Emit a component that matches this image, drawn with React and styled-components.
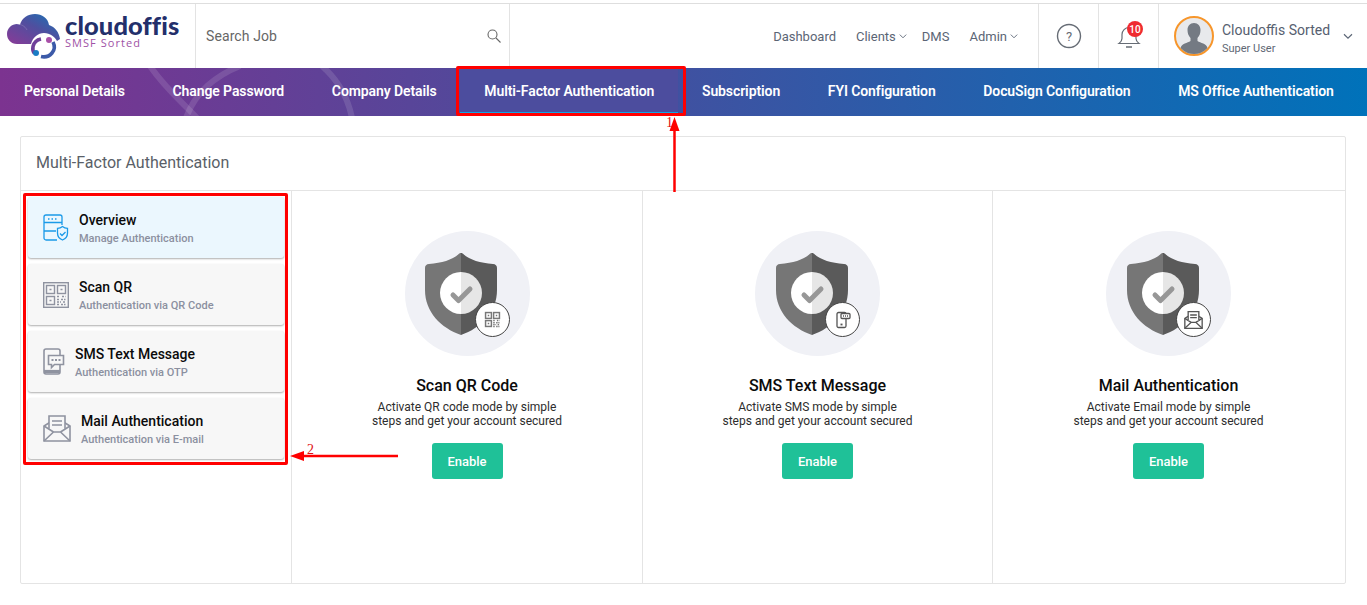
import React from "react";
import styled, { createGlobalStyle } from "styled-components";

const Global = createGlobalStyle`
  html, body { margin: 0; padding: 0; background: #fff; }
  body { font-family: Roboto, "Liberation Sans", sans-serif; }
  * { box-sizing: border-box; }
`;
const Page = styled.div`
  position: relative; width: 1367px; height: 605px; overflow: hidden; background: #fff; padding-top: 3px;
`;
const Header = styled.header`
  display: flex; align-items: stretch; height: 65px; border-top: 1px solid #dedede; background: #fff;
`;
const LogoBox = styled.div`
  width: 196px; border-right: 1px solid #e3e3e3; display: flex; align-items: flex-start; padding: 9px 0 0 7px;
`;
const LogoText = styled.div`
  margin-top: 1px; display: flex; flex-direction: column;
`;
const LogoName = styled.span`
  font-family: Lato, sans-serif; font-weight: 900; font-size: 25.5px; line-height: 22px; color: #232f6b; letter-spacing: 0.1px;
`;
const LogoSub = styled.span`
  font-family: "Open Sans", sans-serif; font-size: 11px; line-height: 12px; color: #a052a6; letter-spacing: 1.05px; margin-top: 1px;
`;
const SearchBox = styled.div`
  width: 314px; border-right: 1px solid #e3e3e3; display: flex; align-items: center; justify-content: space-between;
  padding: 0 8px 0 10px; font-size: 14px; color: #666; letter-spacing: 0.1px;
`;
const Nav = styled.nav`
  flex: 1; display: flex; align-items: center; justify-content: flex-end; gap: 20px; padding-right: 20px;
`;
const NavItem = styled.span`
  display: inline-flex; align-items: center; gap: 3px; font-size: 13px; color: #5b6575;
  margin-left: ${p => p.$tight ? "-5px" : "0"};
`;
const IconCell = styled.div`
  position: relative; width: 60px; border-left: 1px solid #e3e3e3; display: flex; align-items: center; justify-content: center;
`;
const Badge = styled.span`
  position: absolute; left: 28px; top: 17px; width: 16px; height: 16px; border-radius: 50%; background: #ef2b30; color: #fff;
  font-size: 10px; font-weight: 500; display: flex; align-items: center; justify-content: center;
`;
const UserCell = styled.div`
  width: 209px; border-left: 1px solid #e3e3e3; display: flex; align-items: center; padding-left: 15px;
`;
const Avatar = styled.div`
  width: 40px; height: 40px; border-radius: 50%; border: 2px solid #f7962b; background: #e8e9ec; overflow: hidden; flex: none;
`;
const UserText = styled.div`
  margin-left: 8px; margin-top: 4px; display: flex; flex-direction: column; width: 121px;
`;
const UserName = styled.span`
  font-size: 14px; line-height: 18px; color: #566070; white-space: nowrap;
`;
const UserRole = styled.span`
  font-size: 11px; line-height: 14px; margin-top: 3px; color: #5f6875;
`;
const Tabs = styled.div`
  position: relative; display: flex; height: 48px; overflow: hidden;
  background: linear-gradient(90deg, #7c3390 0%, #4c4b9c 40%, #0072ba 100%);
`;
const TabDecor = styled.svg`
  position: absolute; left: 140px; top: 0; width: 230px; height: 48px;
`;
const Tab = styled.div`
  position: relative; display: flex; align-items: center; white-space: nowrap; padding: 0 24px 2px; margin-right: -0.3px;
  color: #fff; font-size: 14px; font-weight: 600; letter-spacing: -0.1px;
  ${p => p.$active && `
    background: #4c4d9e;
    &::after { content: ""; position: absolute; left: 0; right: 0; bottom: 3px; height: 1px; background: #10a5e8; }
  `}
`;
const Card = styled.section`
  margin: 20px 21px 0 20px; height: 448px; border: 1px solid #e4e4e4; border-radius: 2px; display: flex; flex-direction: column;
`;
const CardHead = styled.div`
  height: 54px; flex: none; border-bottom: 1px solid #e4e4e4; display: flex; align-items: center; padding: 0 0 2px 15px;
  font-size: 16px; color: #5a5f68;
`;
const CardBody = styled.div`
  flex: 1; display: grid; grid-template-columns: 271px 350px 350px 352px;
`;
const Side = styled.aside`
  border-right: 1px solid #e4e4e4; display: flex; flex-direction: column; gap: 6px; padding: 6px 7px 0 7px;
`;
const SideItem = styled.div`
  height: 61px; border-radius: 3px; display: flex; align-items: center; gap: 10px; padding-left: 15px;
  background: ${p => (p.$active ? "#ebf7fe" : "#f7f7f7")}; box-shadow: 0 1px 2px rgba(0,0,0,.32);
`;
const SideText = styled.div`
  display: flex; flex-direction: column; padding-top: 2px;
`;
const SideTitle = styled.span`
  font-size: 14px; line-height: 18px; font-weight: 500; color: #0b0b0b; margin-top: -1px;
`;
const SideSub = styled.span`
  font-size: 11px; line-height: 14px; font-weight: 500; color: #8b90a0; margin-top: 3px;
`;
const Method = styled.div`
  display: flex; flex-direction: column; align-items: center; padding-top: 40px;
  border-left: ${p => (p.$divided ? "1px solid #e4e4e4" : "0")};
`;
const Hero = styled.div`
  position: relative; width: 125px; height: 125px; border-radius: 50%; background: #f0f1f6; display: flex; align-items: center; justify-content: center;
`;
const ShieldWrap = styled.div`
  display: flex; margin-right: 12px;
`;
const HeroBadge = styled.div`
  position: absolute; left: 70px; top: 71px; width: 35px; height: 35px; border-radius: 50%; background: #fff; border: 1px solid #444;
  display: flex; align-items: center; justify-content: center;
`;
const MethodTitle = styled.h3`
  margin: 20px 0 0; font-size: 16px; line-height: 19px; font-weight: 500; color: #0b0b0b;
`;
const MethodDesc = styled.p`
  margin: 5px 0 0; font-size: 12px; line-height: 14px; color: #2d2d2d; text-align: center;
`;
const EnableButton = styled.button`
  margin-top: 15px; width: 71px; height: 36px; border: 0; border-radius: 3px; background: #1fc198; color: #fff;
  font-family: inherit; font-size: 13px; font-weight: 500;
`;
const RedBox = styled.div`
  position: absolute; border: 3px solid #f00; border-radius: 2px; pointer-events: none;
  left: ${p => p.$x}px; top: ${p => p.$y}px; width: ${p => p.$w}px; height: ${p => p.$h}px;
`;
const Overlay = styled.svg`
  position: absolute; left: 0; top: 0; width: 1367px; height: 605px; pointer-events: none;
`;
const Mark = styled.span`
  position: absolute; font-family: "Liberation Serif", serif; font-size: 14px; line-height: 14px; color: #e01010;
  left: ${p => p.$x}px; top: ${p => p.$y}px;
`;

const Caret = ({ size = 8, c = "#5b6575" }) => (
  <svg width={size} height={size} viewBox="0 0 8 8" fill="none"><path d="M.8 2.6 4 5.8l3.2-3.2" stroke={c} strokeWidth=".9" /></svg>
);

const LogoMark = () => (
  <svg width="58" height="50" viewBox="7 13 58 50" style={{ flex: "none" }}>
    <defs>
      <linearGradient id="lg" x1="0" y1="1" x2="1" y2="0">
        <stop offset="0" stopColor="#8a3a97" /><stop offset=".55" stopColor="#4f4f9f" /><stop offset="1" stopColor="#1476b8" />
      </linearGradient>
    </defs>
    <path d="M17 44c-6 0-10-4.500-10-10 0-6 5-10 10-10 1 0 2 .2 3 .5C22 18 28 14 35 14c7 0 13 4 14 11 6 2 10 7 11 14l-3 2c-2-4-7-8-13-8-6 0-11 4-13 11H17z" fill="url(#lg)" />
    <path d="M17 24c4 .2 8 2 10 6" fill="none" stroke="rgba(255,255,255,.22)" strokeWidth=".8" />
    <path d="M41 39c-4 .8-7 3.500-8 7.500-.5 2.500 0 5 1.500 7" fill="none" stroke="#6f3f99" strokeWidth="3.600" />
    <path d="M53 42c1.800 3.500 1.500 8-1 11-2.500 3-6.500 4.500-11 3.500" fill="none" stroke="#3c5aa8" strokeWidth="3.600" />
    <circle cx="49" cy="40" r="3" fill="#a84fa8" />
    <circle cx="36" cy="53" r="3" fill="#1a7cc4" />
  </svg>
);
const SearchIcon = () => (
  <svg width="14" height="14" viewBox="0 0 14 14" fill="none" stroke="#666" strokeWidth="1.100"><circle cx="5.500" cy="5.500" r="4.500" /><path d="m9 9 4.500 4.500" /></svg>
);
const HelpIcon = () => (
  <svg width="26" height="26" viewBox="0 0 26 26"><circle cx="13" cy="13" r="11.500" fill="none" stroke="#666c75" strokeWidth="1.400" /><text x="13" y="17.500" textAnchor="middle" fontSize="13" fill="#666c75" fontFamily="Roboto">?</text></svg>
);
const BellIcon = () => (
  <svg width="24" height="26" viewBox="0 0 24 26" fill="none" stroke="#666c75" strokeWidth="1.200" style={{ marginTop: 2 }}>
    <path d="M2 19.500c2-1.500 3-3 3-5V10.500a7 7 0 0 1 14 0v4c0 2 1 3.500 3 5z" /><path d="M9 23h6" strokeWidth="1.500" />
  </svg>
);
const Person = () => (
  <svg width="36" height="36" viewBox="0 0 36 36"><path d="M18 5c-4 0-6.500 3-6.500 7 0 3 1 6 3 8v3c-3 2-9 2.500-10 7l-1 6h29l-1-6c-1-4.500-7-5-10-7v-3c2-2 3-5 3-8 0-4-2.500-7-6.500-7z" fill="#747a83" /></svg>
);
const OverviewIcon = () => (
  <svg width="26" height="27" viewBox="0 0 26 27" fill="none" stroke="#1b9ae8" strokeWidth="1.300" style={{ flex: "none" }}>
    <path d="M14 26H3a2 2 0 0 1-2-2V3a2 2 0 0 1 2-2h14a2 2 0 0 1 2 2v8" /><path d="M1 8.500h18M1 17h12" /><path d="M5 5h1.500M8.500 5H10M12 5h1.500" strokeDasharray="1.500 1" />
    <path d="M19.500 12.500c1.500 1.200 3 1.700 5 1.800v4.700c0 3.500-2.500 6-5 7-2.500-1-5-3.500-5-7v-4.700c2-.1 3.500-.6 5-1.800z" fill="#ebf7fe" /><path d="m17 19.500 2 2 3.500-3.500" />
  </svg>
);
const QrGlyph = ({ s = 26, c = "#8f93a0", framed }) => (
  <svg width={s} height={s} viewBox="0 0 26 26" style={{ flex: "none" }} fill="none" stroke={c} strokeWidth={framed ? 1.400 : 2}>
    {framed && <rect x=".7" y=".7" width="24.600" height="24.600" />}
    <rect x="3.500" y="3.500" width="8" height="8" /><rect x="14.500" y="3.500" width="8" height="8" /><rect x="3.500" y="14.500" width="8" height="8" />
    <path d="M6.500 7.500h2M17.500 7.500h2M6.500 18.500h2" />
    <path d="M14 14.500h3M19 14.500h3.500M14 17.500h2M18 17.500h4.500M14 20h4M20 20h2.500M14 22.500h2M18 22.500h4.500" strokeDasharray="2 1" />
  </svg>
);
const SmsIcon = () => (
  <svg width="22" height="27" viewBox="0 0 22 27" style={{ flex: "none" }} fill="none" stroke="#8f93a0" strokeWidth="1.600">
    <path d="M17 7V3a2 2 0 0 0-2-2H3a2 2 0 0 0-2 2v21a2 2 0 0 0 2 2h12a2 2 0 0 0 2-2v-7" />
    <path d="M1 23.500h16" strokeWidth="3.200" />
    <path d="M5.500 7.500h15v9h-9l-3 3v-3h-3z" fill="#f7f7f7" /><path d="M8.500 12h2M12 12h2M15.500 12h2" strokeWidth="2" />
  </svg>
);
const MailIcon = ({ w = 28, h = 27, c = "#8f93a0", sw = 1.600, bg = "#f7f7f7" }) => (
  <svg width={w} height={h} viewBox="0 0 28 27" style={{ flex: "none" }} fill="none" stroke={c} strokeWidth={sw}>
    <path d="M1 11v15h26V11L14 3z" /><path d="M1 26l9.500-9h7L27 26M1 11l9.500 6M27 11l-9.500 6" /><path d="M6 14V1h16v13" fill={bg} /><path d="M9 6h10M9 10h10" />
  </svg>
);
const PhoneGlyph = () => (
  <svg width="18" height="18" viewBox="0 0 18 18" fill="none" stroke="#555" strokeWidth="1.300">
    <path d="M12 8v7a1.500 1.500 0 0 1-1.500 1.500h-6A1.500 1.500 0 0 1 3 15V3a1.500 1.500 0 0 1 1.500-1.500h6A1.500 1.500 0 0 1 12 3" />
    <rect x="7" y="2.500" width="9" height="5" rx="1" fill="#fff" /><path d="M9 5h1M11 5h1M13 5h1" /><path d="M6.500 13.500h2" strokeWidth="1.800" />
  </svg>
);
const Shield = () => (
  <svg width="72" height="84" viewBox="0 0 72 84">
    <path d="M36 1c-1 0-1.500 .3-2 .8C27 8 17 11 4 12c-2.500 .2-4 1.500-4 4v22c0 22 16 38 36 45z" fill="#767676" />
    <path d="M36 1c1 0 1.500 .3 2 .8C45 8 55 11 68 12c2.500 .2 4 1.500 4 4v22c0 22-16 38-36 45z" fill="#5a5a5a" />
    <path d="M36 20a21 21 0 0 0 0 42z" fill="#fff" />
    <path d="M36 20a21 21 0 0 1 0 42z" fill="#e6e6e6" />
    <path d="m28 43 5.500 5.500L45 37" fill="none" stroke="#979797" strokeWidth="5" strokeLinecap="round" strokeLinejoin="round" />
  </svg>
);

const tabs = ["Personal Details", "Change Password", "Company Details", "Multi-Factor Authentication", "Subscription", "FYI Configuration", "DocuSign Configuration", "MS Office Authentication"];
const sides = [
  { t: "Overview", s: "Manage Authentication", i: <OverviewIcon />, a: true },
  { t: "Scan QR", s: "Authentication via QR Code", i: <QrGlyph framed /> },
  { t: "SMS Text Message", s: "Authentication via OTP", i: <SmsIcon /> },
  { t: "Mail Authentication", s: "Authentication via E-mail", i: <MailIcon /> },
];
const methods = [
  { t: "Scan QR Code", l1: "Activate QR code mode by simple", g: <QrGlyph s={19} c="#777" /> },
  { t: "SMS Text Message", l1: "Activate SMS mode by simple", g: <PhoneGlyph /> },
  { t: "Mail Authentication", l1: "Activate Email mode by simple", g: <MailIcon w={19} h={18} c="#555" sw={2} bg="#fff" /> },
];

export default function App() {
  return (
    <Page>
      <Global />
      <Header>
        <LogoBox>
          <LogoMark />
          <LogoText>
            <LogoName>cloudoffis</LogoName>
            <LogoSub>SMSF Sorted</LogoSub>
          </LogoText>
        </LogoBox>
        <SearchBox>Search Job<SearchIcon /></SearchBox>
        <Nav>
          <NavItem>Dashboard</NavItem>
          <NavItem>Clients<Caret /></NavItem>
          <NavItem $tight>DMS</NavItem>
          <NavItem>Admin<Caret /></NavItem>
        </Nav>
        <IconCell><HelpIcon /></IconCell>
        <IconCell><BellIcon /><Badge>10</Badge></IconCell>
        <UserCell>
          <Avatar><Person /></Avatar>
          <UserText>
            <UserName>Cloudoffis Sorted</UserName>
            <UserRole>Super User</UserRole>
          </UserText>
          <Caret size={10} />
        </UserCell>
      </Header>
      <Tabs>
        <TabDecor viewBox="140 0 230 48" fill="none" stroke="rgba(255,255,255,.12)" strokeWidth="6">
          <path d="M150-2C165 20 180 32 197 50" />
          <path d="M240-2C215 8 195 25 186 50" />
          <path d="M322-2C338 12 348 30 352 50" />
        </TabDecor>
        {tabs.map((t, i) => <Tab key={t} $active={i === 3}>{t}</Tab>)}
      </Tabs>
      <Card>
        <CardHead>Multi-Factor Authentication</CardHead>
        <CardBody>
          <Side>
            {sides.map(s => (
              <SideItem key={s.t} $active={s.a}>
                {s.i}
                <SideText><SideTitle>{s.t}</SideTitle><SideSub>{s.s}</SideSub></SideText>
              </SideItem>
            ))}
          </Side>
          {methods.map((m, i) => (
            <Method key={m.t} $divided={i > 0}>
              <Hero>
                <ShieldWrap><Shield /></ShieldWrap>
                <HeroBadge>{m.g}</HeroBadge>
              </Hero>
              <MethodTitle>{m.t}</MethodTitle>
              <MethodDesc>{m.l1}<br />steps and get your account secured</MethodDesc>
              <EnableButton>Enable</EnableButton>
            </Method>
          ))}
        </CardBody>
      </Card>
      <RedBox $x={456} $y={66} $w={230} $h={50} />
      <RedBox $x={23} $y={193} $w={265} $h={272} />
      <Overlay viewBox="0 0 1367 605">
        <path d="M674.500 192V128" stroke="#f00" strokeWidth="2.500" />
        <path d="M674.500 117l-5 14h10z" fill="#f00" />
        <path d="M398 456H303" stroke="#f00" strokeWidth="2.500" />
        <path d="M290 456l14-5v10z" fill="#f00" />
      </Overlay>
      <Mark $x={666} $y={116}>1</Mark>
      <Mark $x={307} $y={443}>2</Mark>
    </Page>
  );
}
